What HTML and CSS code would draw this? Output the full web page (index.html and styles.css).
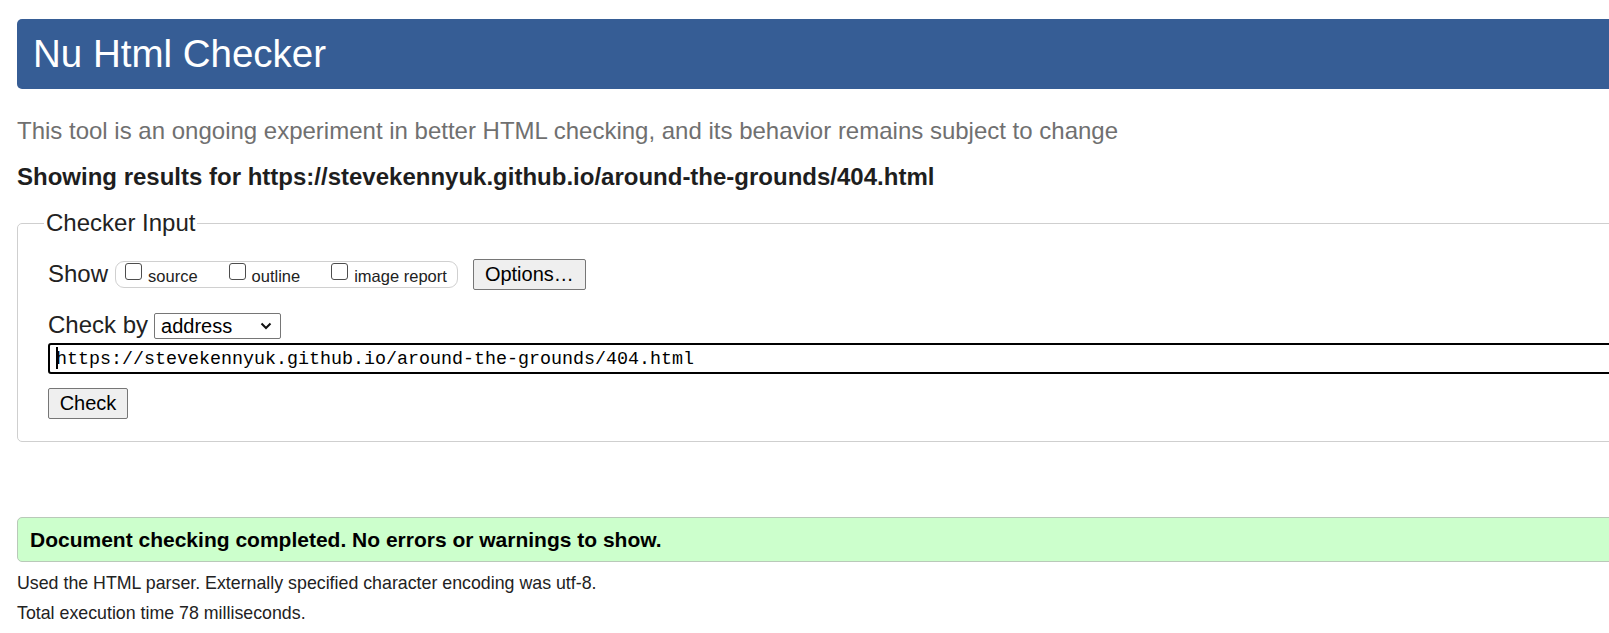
FILE: index.html
```html
<!DOCTYPE html>
<html lang="en">
<head>
<meta charset="utf-8">
<title>Nu Html Checker</title>
<link rel="stylesheet" href="styles.css">
</head>
<body>
<div class="page">
  <h1 class="title">Nu Html Checker</h1>
  <p class="intro">This tool is an ongoing experiment in better HTML checking, and its behavior remains subject to change</p>
  <p class="showing">Showing results for https://stevekennyuk.github.io/around-the-grounds/404.html</p>
  <form class="form">
    <fieldset class="checker">
      <legend class="legend">Checker Input</legend>
      <div class="row-show">
        <span class="lbl">Show</span>
        <span class="opts">
          <label class="opt"><input type="checkbox" class="cb"><span class="opt-text">source</span></label>
          <label class="opt"><input type="checkbox" class="cb"><span class="opt-text">outline</span></label>
          <label class="opt"><input type="checkbox" class="cb"><span class="opt-text">image report</span></label>
        </span>
        <span class="btn btn-options">Options…</span>
      </div>
      <div class="row-by">
        <span class="lbl lbl-by">Check by</span>
        <span class="select"><span class="select-text">address</span><svg class="chev" width="12" height="8" viewBox="0 0 12 8"><path d="M1.5 1.5 L6 6 L10.5 1.5" fill="none" stroke="#111" stroke-width="2"/></svg></span>
      </div>
      <div class="url"><span class="caret"></span>https://stevekennyuk.github.io/around-the-grounds/404.html</div>
      <span class="btn btn-check">Check</span>
    </fieldset>
  </form>
  <p class="success">Document checking completed. No errors or warnings to show.</p>
  <p class="meta">Used the HTML parser. Externally specified character encoding was utf-8.</p>
  <p class="meta">Total execution time 78 milliseconds.</p>
</div>
</body>
</html>
```
FILE: styles.css
```css
html, body {
  margin: 0;
  padding: 0;
  overflow: hidden;
  background: #fff;
}
body {
  font-family: "Liberation Sans", Arial, sans-serif;
  color: #222;
}
.page {
  width: 1700px;
  padding: 19px 0 0 17px;
}
.title {
  margin: 0;
  height: 70px;
  line-height: 70px;
  background: #365d95;
  color: #fff;
  font-size: 38.5px;
  font-weight: normal;
  padding-left: 16px;
  border-radius: 5px;
}
.intro {
  margin: 28px 0 0;
  font-size: 24px;
  line-height: 28px;
  color: #707070;
}
.showing {
  margin: 18px 0 0;
  font-size: 24px;
  line-height: 28px;
  font-weight: bold;
  color: #1e1e1e;
}
.form {
  margin: 19px 0 0;
}
.checker {
  margin: 0;
  padding: 23px 0 22px 30px;
  border: 1px solid #cfcfcf;
  border-radius: 5px;
  min-width: 0;
}
.legend {
  font-size: 24px;
  line-height: 26px;
  padding: 0 2px;
  margin-left: -4px;
  color: #222;
}
.row-show {
  display: flex;
  align-items: flex-start;
  height: 32px;
}
.lbl {
  font-size: 24px;
  line-height: 29px;
  color: #222;
}
.opts {
  display: flex;
  gap: 31px;
  margin: 2px 0 0 7px;
  height: 27px;
  box-sizing: border-box;
  border: 1px solid #d0d0d0;
  border-radius: 9px;
  padding: 0 10px 0 9px;
}
.opt {
  display: flex;
  align-items: flex-start;
}
.cb {
  appearance: none;
  -webkit-appearance: none;
  width: 17px;
  height: 17px;
  margin: 1px 6px 0 0;
  box-sizing: border-box;
  border: 1px solid #4d4d4d;
  border-radius: 3px;
  background: #fff;
}
.opt-text {
  font-size: 16.5px;
  line-height: 21px;
  padding-top: 4px;
  color: #222;
}
.btn {
  display: flex;
  align-items: center;
  justify-content: center;
  box-sizing: border-box;
  height: 31px;
  background: #efefef;
  border: 1px solid #767676;
  border-radius: 2px;
  font-size: 20px;
  color: #000;
}
.btn-options {
  width: 113px;
  margin-left: 15px;
}
.row-by {
  display: flex;
  align-items: flex-start;
  margin-top: 22px;
}
.lbl-by {
  line-height: 24px;
}
.select {
  display: flex;
  align-items: center;
  justify-content: space-between;
  box-sizing: border-box;
  width: 127px;
  height: 26px;
  margin-left: 6px;
  padding: 0 8px 0 6px;
  border: 1px solid #767676;
  border-radius: 2px;
  background: #fff;
}
.select-text {
  font-size: 20px;
  color: #000;
}
.chev {
  display: block;
}
.url {
  margin-top: 4px;
  box-sizing: border-box;
  height: 31px;
  border: 2px solid #000;
  border-radius: 3px;
  padding: 2px 0 0 6px;
  font-family: "Liberation Mono", "Courier New", monospace;
  font-size: 18.33px;
  line-height: 25px;
  color: #000;
  white-space: nowrap;
}
.caret {
  display: inline-block;
  width: 0;
  height: 22px;
  border-left: 2px solid #000;
  margin-right: -2px;
  vertical-align: -5px;
}
.btn-check {
  width: 80px;
  margin-top: 14px;
}
.success {
  margin: 75px 0 0;
  box-sizing: border-box;
  height: 45px;
  border: 1px solid #b9c9b9;
  border-radius: 5px;
  background: #ccffcc;
  padding-left: 12px;
  font-size: 21px;
  line-height: 43px;
  font-weight: bold;
  color: #000;
}
.meta {
  margin: 0;
  font-size: 17.8px;
  line-height: 30px;
  color: #222;
}
.success + .meta {
  margin-top: 6px;
}
```
